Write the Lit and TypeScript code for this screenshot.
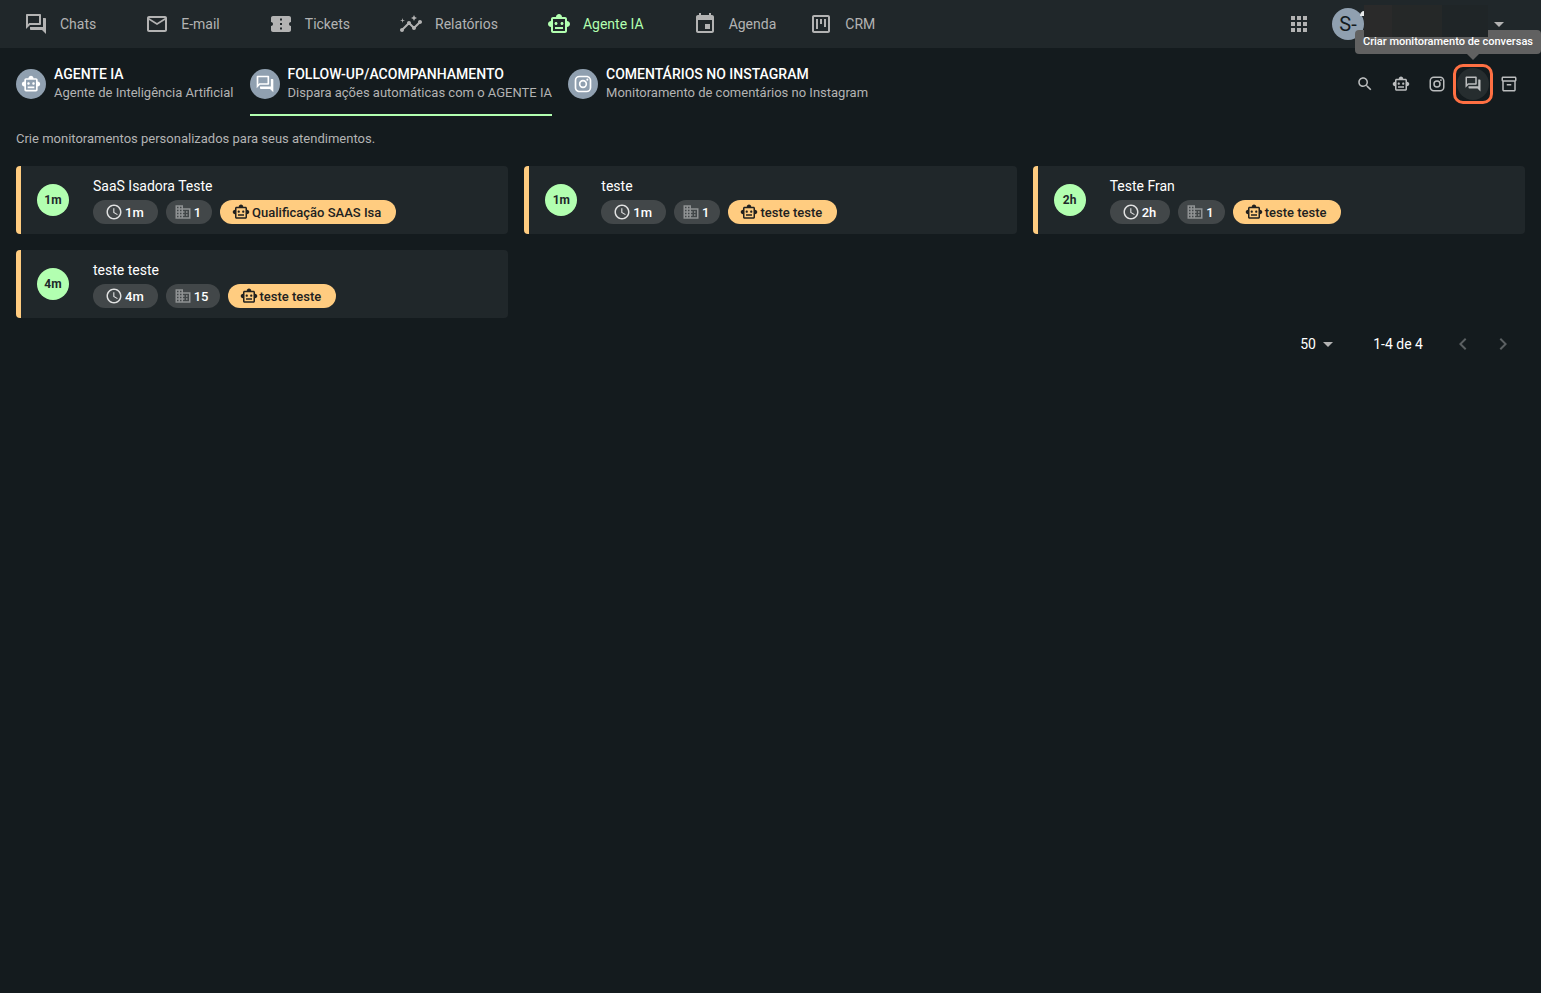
import { LitElement, html, css, svg } from "lit";
import { customElement, property } from "lit/decorators.js";

const ICONS: Record<string, string> = {
  forum: "M15 4v7H5.17L4 12.17V4h11m1-2H3c-.55 0-1 .45-1 1v14l4-4h10c.55 0 1-.45 1-1V3c0-.55-.45-1-1-1zm5 4h-2v9H6v2c0 .55.45 1 1 1h11l4 4V7c0-.55-.45-1-1-1z",
  mail: "M22 6c0-1.1-.9-2-2-2H4c-1.1 0-2 .9-2 2v12c0 1.100.9 2 2 2h16c1.100 0 2-.9 2-2V6zm-2 0l-8 5-8-5h16zm0 12H4V8l8 5 8-5v10z",
  ticket: "M22 10V6c0-1.110-.9-2-2-2H4c-1.100 0-1.990.89-1.990 2v4c1.100 0 1.990.9 1.990 2s-.89 2-2 2v4c0 1.100.9 2 2 2h16c1.100 0 2-.9 2-2v-4c-1.100 0-2-.9-2-2s.9-2 2-2zm-9 7.500h-2v-2h2v2zm0-4.500h-2v-2h2v2zm0-4.500h-2v-2h2v2z",
  insights: "M21 8c-1.450 0-2.260 1.440-1.930 2.510l-3.550 3.560c-.3-.09-.74-.09-1.040 0l-2.550-2.550C12.270 10.450 11.460 9 10 9c-1.450 0-2.270 1.440-1.930 2.520l-4.560 4.550C2.440 15.740 1 16.550 1 18c0 1.100.9 2 2 2 1.450 0 2.260-1.440 1.930-2.510l4.550-4.560c.3.09.74.09 1.040 0l2.550 2.550C12.730 16.550 13.540 18 15 18c1.450 0 2.270-1.440 1.930-2.520l3.560-3.550C21.560 12.260 23 11.450 23 10c0-1.100-.9-2-2-2zM15 9l.94-2.070L18 6l-2.060-.93L15 3l-.92 2.070L12 6l2.080.93zM3.500 11L4 9l2-.5L4 8l-.5-2L3 8l-2 .5L3 9z",
  robot: "M20 9V7c0-1.100-.9-2-2-2h-3c0-1.660-1.340-3-3-3S9 3.340 9 5H6c-1.100 0-2 .9-2 2v2c-1.660 0-3 1.340-3 3s1.340 3 3 3v4c0 1.100.9 2 2 2h12c1.100 0 2-.9 2-2v-4c1.660 0 3-1.340 3-3s-1.340-3-3-3zm-2 10H6V7h12v12zm-9-6c-.83 0-1.500-.67-1.500-1.500S8.170 10 9 10s1.500.67 1.500 1.500S9.830 13 9 13zm7.500-1.500c0 .83-.67 1.500-1.500 1.500s-1.500-.67-1.500-1.500.67-1.500 1.500-1.500 1.500.67 1.500 1.500zM8 15h8v2H8v-2z",
  event: "M17 12h-5v5h5v-5zM16 1v2H8V1H6v2H5c-1.110 0-1.990.9-1.990 2L3 19c0 1.100.89 2 2 2h14c1.100 0 2-.9 2-2V5c0-1.100-.9-2-2-2h-1V1h-2zm3 18H5V8h14v11z",
  kanban: "M19 3H5c-1.100 0-2 .9-2 2v14c0 1.100.9 2 2 2h14c1.100 0 2-.9 2-2V5c0-1.100-.9-2-2-2zm0 16H5V5h14v14zM7 7h2v10H7zm4 0h2v5h-2zm4 0h2v8h-2z",
  apps: "M4 8h4V4H4v4zm6 12h4v-4h-4v4zm-6 0h4v-4H4v4zm0-6h4v-4H4v4zm6 0h4v-4h-4v4zm6-10v4h4V4h-4zm-6 4h4V4h-4v4zm6 6h4v-4h-4v4zm0 6h4v-4h-4v4z",
  caret: "M7 10l5 5 5-5z",
  instagram: "M7.800 2h8.400C19.400 2 22 4.600 22 7.800v8.400a5.800 5.800 0 0 1-5.800 5.800H7.800C4.600 22 2 19.400 2 16.200V7.800A5.800 5.800 0 0 1 7.800 2m-.2 2A3.600 3.600 0 0 0 4 7.600v8.800C4 18.390 5.610 20 7.600 20h8.800a3.600 3.600 0 0 0 3.600-3.600V7.600C20 5.610 18.390 4 16.400 4H7.600m9.650 1.500a1.250 1.250 0 1 1 0 2.500 1.250 1.250 0 0 1 0-2.500M12 7a5 5 0 1 1 0 10 5 5 0 0 1 0-10m0 2a3 3 0 1 0 0 6 3 3 0 0 0 0-6z",
  search: "M15.500 14h-.79l-.28-.27C15.410 12.590 16 11.110 16 9.500 16 5.910 13.090 3 9.500 3S3 5.910 3 9.500 5.910 16 9.500 16c1.610 0 3.090-.59 4.230-1.570l.27.28v.79l5 4.990L20.490 19l-4.990-5zm-6 0C7.010 14 5 11.990 5 9.500S7.010 5 9.500 5 14 7.010 14 9.500 11.990 14 9.500 14z",
  archive: "M20 2H4c-1 0-2 .9-2 2v3.010c0 .72.43 1.340 1 1.690V20c0 1.100 1.100 2 2 2h14c.9 0 2-.9 2-2V8.700c.57-.35 1-.97 1-1.690V4c0-1.100-1-2-2-2zm-1 18H5V9h14v11zm1-13H4V4h16v3zM9 12h6v2H9z",
  clock: "M11.990 2C6.470 2 2 6.480 2 12s4.470 10 9.990 10C17.520 22 22 17.520 22 12S17.520 2 11.990 2zM12 20c-4.420 0-8-3.580-8-8s3.580-8 8-8 8 3.580 8 8-3.580 8-8 8zm.5-13H11v6l5.250 3.150.75-1.230-4.500-2.670z",
  business: "M12 7V3H2v18h20V7H12zM6 19H4v-2h2v2zm0-4H4v-2h2v2zm0-4H4V9h2v2zm0-4H4V5h2v2zm4 12H8v-2h2v2zm0-4H8v-2h2v2zm0-4H8V9h2v2zm0-4H8V5h2v2zm10 12h-8v-2h2v-2h-2v-2h2v-2h-2V9h8v10zm-2-8h-2v2h2v-2zm0 4h-2v2h2v-2z",
  prev: "M15.410 7.410L14 6l-6 6 6 6 1.410-1.410L10.830 12z",
  next: "M10 6L8.590 7.410 13.170 12l-4.580 4.590L10 18l6-6z",
};

@customElement("app-icon")
class AppIcon extends LitElement {
  @property() name = "";
  @property({ type: Number }) size = 24;

  static styles = css`
    :host { display: inline-flex; flex: none; }
    svg { display: block; fill: currentColor; }
  `;

  render() {
    return html`<svg width=${this.size} height=${this.size} viewBox="0 0 24 24" aria-hidden="true">
      ${svg`<path d=${ICONS[this.name]}></path>`}
    </svg>`;
  }
}

interface Monitor { name: string; time: string; companies: number; agent: string; }

@customElement("monitor-card")
class MonitorCard extends LitElement {
  @property({ attribute: false }) item!: Monitor;

  static styles = css`
    :host {
      display: flex; align-items: center; gap: 24px; box-sizing: border-box; min-width: 0;
      padding: 10px 16px; border-left: 5px solid #ffcc80; border-radius: 4px; background: #20272a;
    }
    .badge {
      flex: none; display: grid; place-items: center; width: 32px; height: 32px; border-radius: 50%;
      background: #b2ffb0; color: #20272a; font-size: 12px; font-weight: 700;
    }
    .body { display: flex; flex-direction: column; gap: 4px; min-width: 0; }
    .name { margin: 0; color: #fff; font-size: 14px; font-weight: 400; line-height: 20px; }
    .chips { display: flex; gap: 8px; }
    .chip {
      display: inline-flex; align-items: center; gap: 2px; height: 24px; box-sizing: border-box;
      padding: 0 14px 0 12px; border-radius: 12px; background: #424749; color: #fff;
      font-size: 13px; font-weight: 500; white-space: nowrap;
    }
    .clock { color: #e0e1e1; }
    .text { color: #fff; }
    .count { padding: 0 11px 0 8px; }
    .count app-icon { color: #8f9293; }
    .agent { padding: 0 15px 0 12px; }
    .agent, .agent .text { background: #ffcc80; color: #21211f; }
  `;

  render() {
    const { name, time, companies, agent } = this.item;
    return html`
      <div class="badge">${time}</div>
      <div class="body">
        <h3 class="name">${name}</h3>
        <div class="chips">
          <span class="chip clock"><app-icon name="clock" size="18"></app-icon><span class="text">${time}</span></span>
          <span class="chip count"><app-icon name="business" size="18"></app-icon><span class="text">${companies}</span></span>
          <span class="chip agent"><app-icon name="robot" size="18"></app-icon><span class="text">${agent}</span></span>
        </div>
      </div>`;
  }
}

@customElement("app-root")
class AppRoot extends LitElement {
  static styles = css`
    :host {
      display: block; min-height: 100vh; background: #141b1e; color: #fff;
      font-family: Roboto, "Liberation Sans", sans-serif; font-size: 14px;
    }
    a { color: inherit; text-decoration: none; }
    button { margin: 0; padding: 0; border: 0; background: none; color: inherit; font: inherit; cursor: pointer; }
    .topbar { display: flex; align-items: center; height: 48px; padding: 0 24px; background: #20272a; color: #b3b3b3; }
    .nav { display: flex; align-items: center; gap: 49px; }
    .nav-link { display: flex; align-items: center; gap: 12px; line-height: 24px; white-space: nowrap; }
    .nav-link.active { color: #b2ffb0; }
    .nav-link:last-child { margin-left: -16px; }
    .account { display: flex; align-items: center; margin-left: auto; }
    .apps { display: flex; margin-right: 21px; }
    .user { display: flex; align-items: center; margin-right: 6px; }
    .avatar {
      position: relative; display: grid; place-items: center; width: 32px; height: 32px; border-radius: 50%;
      background: #90a0b0; color: #141b1e; font-size: 20px;
    }
    .status { position: absolute; top: 3px; right: 0; width: 4px; height: 5px; border-top-left-radius: 100%; background: #e8eaea; }
    .mask {
      position: relative; z-index: 3; width: 124px; height: 32px; margin-top: -7px; margin-right: -1px;
      background: linear-gradient(90deg, #2a2a2a 28px, #252828 28px, #252828 78px, #1f2527 78px);
    }
    .toolbar { display: flex; align-items: center; justify-content: space-between; height: 72px; padding: 0 16px; }
    .tabs { display: flex; gap: 16px; }
    .tab { display: flex; align-items: center; gap: 8px; height: 64px; white-space: nowrap; }
    .tab.active { box-shadow: inset 0 -2px #b2ffb0; }
    .tab-icon { display: grid; place-items: center; width: 30px; height: 30px; border-radius: 50%; background: #90a0b0; }
    .tab-title { display: block; font-weight: 500; line-height: 18px; }
    .tab-text { display: block; color: #b3b3b3; font-size: 13px; line-height: 20px; }
    .actions { display: flex; gap: 4px; color: #bbbdbe; }
    .action { position: relative; display: grid; place-items: center; width: 32px; height: 32px; border-radius: 50%; }
    .action.active { background: #262d2f; }
    .action.active::after {
      content: ""; position: absolute; inset: -4px; border: 3px solid #ff7043; border-radius: 10px;
    }
    .tooltip {
      position: absolute; z-index: 2; right: -52px; bottom: 46px; padding: 0 8px; border-radius: 4px;
      background: #616161; color: #fff; font-size: 11px; font-weight: 500; line-height: 24px; white-space: nowrap;
    }
    .tooltip::after {
      content: ""; position: absolute; top: 100%; right: 62px;
      border: 6px solid transparent; border-top-color: #616161; border-bottom: 0;
    }
    .intro { margin: 0; padding: 8px 16px 16px; color: #b3b3b3; font-size: 13px; line-height: 22px; }
    .grid { display: grid; grid-template-columns: repeat(3, minmax(0, 1fr)); gap: 16px; padding: 0 16px; }
    .pager { display: flex; align-items: center; justify-content: flex-end; min-height: 52px; padding: 0 18px; }
    .size { position: relative; display: flex; align-items: center; margin-right: 33px; }
    .size select {
      appearance: none; width: 40px; height: 24px; margin: 0; padding: 0; border: 0;
      background: none; color: #fff; font: inherit;
    }
    .size app-icon { position: absolute; right: 0; color: #b3b3b3; pointer-events: none; }
    .range { margin-right: 20px; }
    .step { display: grid; place-items: center; width: 40px; height: 40px; }
    .step:disabled { color: #5b6062; }
  `;

  private nav = [
    ["forum", "Chats"], ["mail", "E-mail"], ["ticket", "Tickets"], ["insights", "Relatórios"],
    ["robot", "Agente IA"], ["event", "Agenda"], ["kanban", "CRM"],
  ];

  private tabs = [
    ["robot", "AGENTE IA", "Agente de Inteligência Artificial"],
    ["forum", "FOLLOW-UP/ACOMPANHAMENTO", "Dispara ações automáticas com o AGENTE IA"],
    ["instagram", "COMENTÁRIOS NO INSTAGRAM", "Monitoramento de comentários no Instagram"],
  ];

  private actions = [
    ["search", "Pesquisar"], ["robot", "Criar agente"], ["instagram", "Criar monitoramento do Instagram"],
    ["forum", "Criar monitoramento de conversas"], ["archive", "Arquivados"],
  ];

  private monitors: Monitor[] = [
    { name: "SaaS Isadora Teste", time: "1m", companies: 1, agent: "Qualificação SAAS Isa" },
    { name: "teste", time: "1m", companies: 1, agent: "teste teste" },
    { name: "Teste Fran", time: "2h", companies: 1, agent: "teste teste" },
    { name: "teste teste", time: "4m", companies: 15, agent: "teste teste" },
  ];

  render() {
    return html`
      <header class="topbar">
        <nav class="nav">
          ${this.nav.map(([icon, label]) => html`
            <a class="nav-link ${label === "Agente IA" ? "active" : ""}" href="#"><app-icon name=${icon}></app-icon>${label}</a>`)}
        </nav>
        <div class="account">
          <button class="apps" aria-label="Aplicativos"><app-icon name="apps"></app-icon></button>
          <button class="user" aria-label="Conta">
            <span class="avatar">S-<span class="status"></span></span>
            <span class="mask"></span>
            <app-icon name="caret"></app-icon>
          </button>
        </div>
      </header>
      <div class="toolbar">
        <nav class="tabs">
          ${this.tabs.map(([icon, title, text], i) => html`
            <a class="tab ${i === 1 ? "active" : ""}" href="#">
              <span class="tab-icon"><app-icon name=${icon} size="20"></app-icon></span>
              <span><span class="tab-title">${title}</span><span class="tab-text">${text}</span></span>
            </a>`)}
        </nav>
        <div class="actions">
          ${this.actions.map(([icon, label]) => html`
            <button class="action ${icon === "forum" ? "active" : ""}" aria-label=${label}>
              <app-icon name=${icon} size="18"></app-icon>
              ${icon === "forum" ? html`<span class="tooltip" role="tooltip">${label}</span>` : null}
            </button>`)}
        </div>
      </div>
      <main>
        <p class="intro">Crie monitoramentos personalizados para seus atendimentos.</p>
        <section class="grid">
          ${this.monitors.map((m) => html`<monitor-card .item=${m}></monitor-card>`)}
        </section>
        <footer class="pager">
          <div class="size">
            <select aria-label="Itens por página"><option>50</option><option>100</option></select>
            <app-icon name="caret"></app-icon>
          </div>
          <span class="range">1-4 de 4</span>
          <button class="step" disabled aria-label="Página anterior"><app-icon name="prev"></app-icon></button>
          <button class="step" disabled aria-label="Próxima página"><app-icon name="next"></app-icon></button>
        </footer>
      </main>`;
  }
}
